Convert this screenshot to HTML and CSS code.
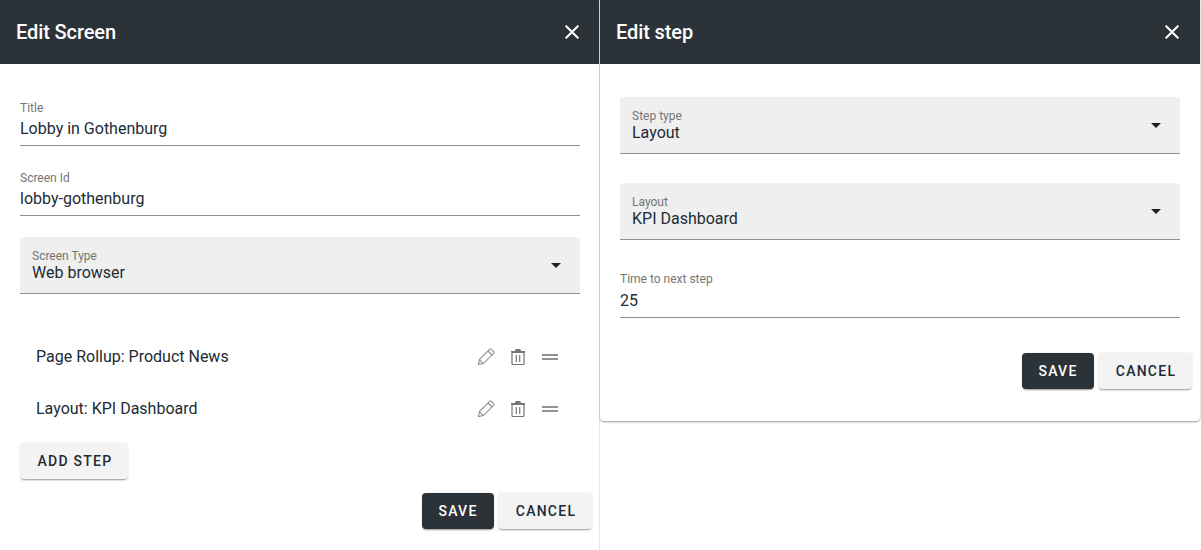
FILE: index.html
```html
<!DOCTYPE html>
<html lang="en">
<head>
    <meta charset="UTF-8">
    <title>Edit Screen</title>
    <link rel="stylesheet" href="styles.css">
</head>
<body>
    <div class="panels">
        <section class="panel panel-left">
            <header class="panel-header">
                <h2>Edit Screen</h2>
                <svg class="close-icon" viewBox="0 0 24 24"><path d="M19 6.41 17.59 5 12 10.59 6.41 5 5 6.41 10.59 12 5 17.59 6.41 19 12 13.41 17.59 19 19 17.59 13.41 12z"/></svg>
            </header>
            <div class="panel-body">
                <div class="text-field first-field">
                    <label>Title</label>
                    <div class="value">Lobby in Gothenburg</div>
                </div>
                <div class="text-field">
                    <label>Screen Id</label>
                    <div class="value">lobby-gothenburg</div>
                </div>
                <div class="select-field">
                    <div>
                        <label>Screen Type</label>
                        <div class="value">Web browser</div>
                    </div>
                    <span class="arrow"></span>
                </div>
                <ul class="step-list">
                    <li>
                        <span class="step-name">Page Rollup: Product News</span>
                        <svg class="icon" viewBox="0 0 20 20"><path class="pencil" d="M2.5 18.5 3.4 13.6 13.8 3.2a1 1 0 0 1 1.4 0l2.6 2.6a1 1 0 0 1 0 1.4L7.4 17.6zM3.4 13.6l4 4M12 5l4 4"/></svg>
                        <svg class="icon" viewBox="0 0 20 20"><path class="outline" d="M4 6.5h12v11.3a.7.7 0 0 1-.7.7H4.7a.7.7 0 0 1-.7-.7zM8.3 9v7M11.7 9v7"/><path class="lid" d="M3 6.5V5h4l.7-2h4.6l.7 2h4v1.5z"/></svg>
                        <svg class="icon" viewBox="0 0 20 20"><path class="bars" d="M2 9h16M2 13h16"/></svg>
                    </li>
                    <li>
                        <span class="step-name">Layout: KPI Dashboard</span>
                        <svg class="icon" viewBox="0 0 20 20"><path class="pencil" d="M2.5 18.5 3.4 13.6 13.8 3.2a1 1 0 0 1 1.4 0l2.6 2.6a1 1 0 0 1 0 1.4L7.4 17.6zM3.4 13.6l4 4M12 5l4 4"/></svg>
                        <svg class="icon" viewBox="0 0 20 20"><path class="outline" d="M4 6.5h12v11.3a.7.7 0 0 1-.7.7H4.7a.7.7 0 0 1-.7-.7zM8.3 9v7M11.7 9v7"/><path class="lid" d="M3 6.5V5h4l.7-2h4.6l.7 2h4v1.5z"/></svg>
                        <svg class="icon" viewBox="0 0 20 20"><path class="bars" d="M2 9h16M2 13h16"/></svg>
                    </li>
                </ul>
                <button class="btn btn-light add-step">Add step</button>
                <div class="actions">
                    <button class="btn btn-dark">Save</button>
                    <button class="btn btn-light">Cancel</button>
                </div>
            </div>
        </section>

        <section class="panel panel-right">
            <header class="panel-header">
                <h2>Edit step</h2>
                <svg class="close-icon" viewBox="0 0 24 24"><path d="M19 6.41 17.59 5 12 10.59 6.41 5 5 6.41 10.59 12 5 17.59 6.41 19 12 13.41 17.59 19 19 17.59 13.41 12z"/></svg>
            </header>
            <div class="panel-body">
                <div class="select-field first-select">
                    <div>
                        <label>Step type</label>
                        <div class="value">Layout</div>
                    </div>
                    <span class="arrow"></span>
                </div>
                <div class="select-field second-select">
                    <div>
                        <label>Layout</label>
                        <div class="value">KPI Dashboard</div>
                    </div>
                    <span class="arrow"></span>
                </div>
                <div class="text-field time-field">
                    <label>Time to next step</label>
                    <div class="value">25</div>
                </div>
                <div class="actions actions-right">
                    <button class="btn btn-dark">Save</button>
                    <button class="btn btn-light">Cancel</button>
                </div>
            </div>
        </section>
    </div>
</body>
</html>
```

FILE: styles.css
```css
:root {
    --header-bg: #2b3238;
    --text-primary: #212b36;
    --text-label: #757575;
    --field-line: #8f8f8f;
    --field-bg: #efefef;
}

*, *::before, *::after {
    box-sizing: border-box;
    margin: 0;
    padding: 0;
}

body {
    font-family: Roboto, "Liberation Sans", sans-serif;
    background: #fff;
    color: var(--text-primary);
    height: 550px;
    overflow: hidden;
}

.panels {
    display: flex;
    align-items: flex-start;
    width: 1201px;
}

.panel {
    width: 600px;
    background: #fff;
}

.panel-left {
    height: 550px;
    border-right: 1px solid #e6e6e6;
}

.panel-right {
    height: 421px;
    border-radius: 0 0 4px 4px;
    box-shadow: 0 1px 2px rgba(0, 0, 0, 0.4);
}

.panel-header {
    height: 64px;
    padding: 0 16px;
    display: flex;
    align-items: center;
    justify-content: space-between;
    background: var(--header-bg);
    color: #fff;
}

.panel-left .panel-header {
    padding-right: 15px;
}

.panel-header h2 {
    font-size: 20px;
    font-weight: 500;
    letter-spacing: -0.1px;
}

.close-icon {
    width: 24px;
    height: 24px;
    fill: #fff;
}

.panel-body {
    padding: 0 20px;
}

.panel-left .panel-body {
    padding-right: 19px;
}

label {
    display: block;
    font-size: 12px;
    line-height: 14px;
    color: var(--text-label);
}

.value {
    font-size: 16px;
    line-height: 20px;
}

.text-field {
    height: 46px;
    padding-top: 1px;
    margin-top: 24px;
    border-bottom: 1px solid var(--field-line);
}

.text-field .value {
    margin-top: 4px;
}

.first-field {
    margin-top: 36px;
}

.select-field {
    height: 57px;
    margin-top: 21px;
    padding: 12px 12px 0;
    display: flex;
    justify-content: space-between;
    background: var(--field-bg);
    border-radius: 4px 4px 0 0;
    border-bottom: 1px solid var(--field-line);
}

.first-select {
    margin-top: 33px;
}

.second-select {
    margin-top: 29px;
}

.text-field.time-field {
    height: 47px;
    margin-top: 31px;
}

.time-field .value {
    margin-top: 5px;
}

.arrow {
    width: 0;
    height: 0;
    margin: 14px 7px 0 0;
    border-left: 5px solid transparent;
    border-right: 5px solid transparent;
    border-top: 5px solid #212121;
}

.step-list {
    list-style: none;
    margin-top: 36px;
}

.step-list li {
    height: 52px;
    padding: 0 20px 0 16px;
    display: flex;
    align-items: center;
    gap: 12px;
}

.step-name {
    flex-grow: 1;
    font-size: 16px;
}

.icon {
    width: 20px;
    height: 20px;
    fill: none;
}

.pencil {
    stroke: #8f8f8f;
    stroke-width: 1.1;
}

.outline {
    stroke: #757575;
    stroke-width: 1.2;
}

.lid {
    fill: #757575;
}

.bars {
    stroke: #6f6f6f;
    stroke-width: 1.7;
}

.btn {
    height: 36px;
    border: none;
    border-radius: 4px;
    font-family: inherit;
    font-size: 14px;
    font-weight: 500;
    letter-spacing: 1.25px;
    text-transform: uppercase;
    box-shadow: 0 2px 2px -1px rgba(0, 0, 0, 0.4), 0 0 2px rgba(0, 0, 0, 0.12);
}

.btn-dark {
    width: 72px;
    background: var(--header-bg);
    color: #fff;
}

.btn-light {
    width: 94px;
    padding-left: 2px;
    background: #f3f3f3;
    color: var(--text-primary);
}

.add-step {
    width: 108px;
    display: block;
    margin-top: 9px;
}

.actions {
    display: flex;
    justify-content: flex-end;
    gap: 4px;
    margin: 14px -12px 0 0;
}

.actions-right {
    margin-top: 35px;
}
```
